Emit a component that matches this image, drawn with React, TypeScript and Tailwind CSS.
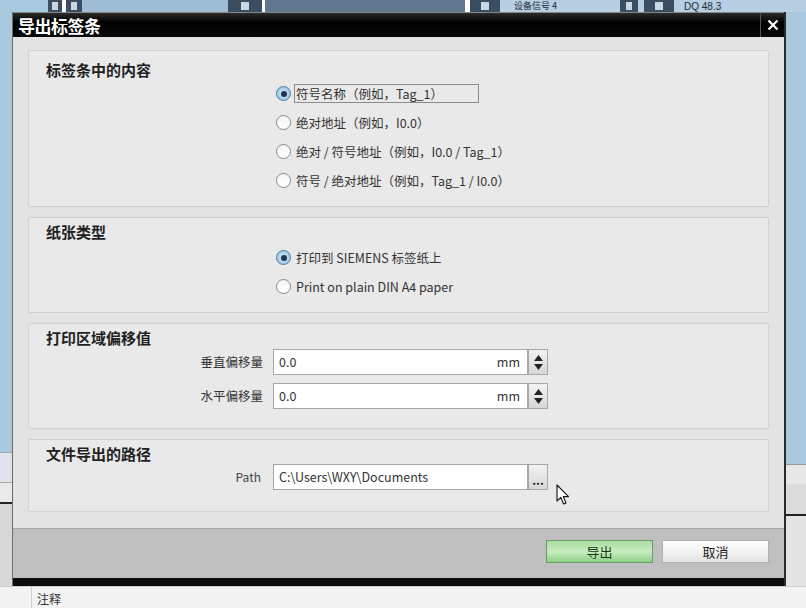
import React from "react";

const font = { fontFamily: '"Noto Sans CJK SC", "Noto Sans", sans-serif' };

function Radio({ checked, label, focus }: { checked?: boolean; label: string; focus?: boolean }) {
  return (
    <div className="flex items-center h-[29px]">
      {checked ? (
        <div className="w-[15px] h-[15px] rounded-full border border-[#4a7fa8] bg-[radial-gradient(circle,#e8f4fc_0%,#9cc6e4_70%,#6ea6cf_100%)] flex items-center justify-center shrink-0">
          <div className="w-[6px] h-[6px] rounded-full bg-[#1d3550]" />
        </div>
      ) : (
        <div className="w-[15px] h-[15px] rounded-full border border-[#8a8a8a] bg-[linear-gradient(#f4f4f4,#ffffff)] shrink-0" />
      )}
      <div
        className={
          "ml-[3px] pl-[1px] text-[12.5px] leading-[16px] text-[#333] " +
          (focus ? "border border-[#8c8c8c] w-[185px] h-[19px] flex items-center" : "border border-transparent")
        }
      >
        {label}
      </div>
    </div>
  );
}

function Section({ title, children, h, pt }: { title: string; children: React.ReactNode; h: string; pt: string }) {
  return (
    <div className={"border border-[#d2d2d2] bg-[#e9e9e9] rounded-[2px] " + h}>
      <div className={"pl-[17px] text-[15px] font-bold leading-[22px] text-[#1f1f1f] " + pt}>{title}</div>
      {children}
    </div>
  );
}

function Spinner() {
  return (
    <div className="w-[20px] h-[26px] border border-[#a8a8a8] bg-[linear-gradient(#f2f2f2,#d6d6d6)] flex flex-col items-center justify-center gap-[3px]">
      <svg width="9" height="6" viewBox="0 0 9 6"><path d="M0 6 L4.5 0 L9 6 Z" fill="#222" /></svg>
      <svg width="9" height="6" viewBox="0 0 9 6"><path d="M0 0 L9 0 L4.5 6 Z" fill="#222" /></svg>
    </div>
  );
}

function NumRow({ label }: { label: string }) {
  return (
    <div className="flex items-center h-[26px]">
      <div className="w-[244px] text-right pr-[10px] text-[12.5px] text-[#333]">{label}</div>
      <div className="w-[255px] h-[26px] bg-white border border-[#a8a8a8] flex items-center justify-between px-[5px] text-[12.5px] text-[#333]">
        <span>0.0</span>
        <span className="pr-[2px]">mm</span>
      </div>
      <Spinner />
    </div>
  );
}

export default function App() {
  return (
    <div className="w-[806px] h-[608px] overflow-hidden bg-[#a8c8df] flex flex-col relative" style={font}>
      {/* background app top strip */}
      <div className="h-[12px] flex items-stretch shrink-0 bg-[#9dbcd4]">
        <div className="w-[48px] bg-[#a9c9e1]" />
        <div className="w-[14px] bg-[#3b4d60] flex items-center justify-center"><div className="w-[6px] h-[8px] bg-[#c9d7e3]" /></div>
        <div className="w-[4px] bg-white" />
        <div className="w-[16px] bg-[#3b4d60] flex items-center justify-center"><div className="w-[6px] h-[8px] bg-[#c9d7e3]" /></div>
        <div className="w-[146px] bg-[#9fbdd4]" />
        <div className="w-[34px] bg-[#3b4d60] flex items-center justify-center"><div className="w-[8px] h-[8px] bg-[#c9d7e3]" /></div>
        <div className="w-[3px] bg-white" />
        <div className="w-[200px] bg-[#5f7890]" />
        <div className="w-[5px] bg-white" />
        <div className="w-[30px] bg-[#3b4d60] flex items-center justify-center"><div className="w-[8px] h-[8px] bg-[#c9d7e3]" /></div>
        <div className="w-[120px] bg-[#b7cfe2] flex items-center pl-[14px]">
          <span className="text-[9px] leading-[10px] text-[#1d2a38] whitespace-nowrap">设备信号 4</span>
        </div>
        <div className="w-[18px] bg-[#3b4d60] flex items-center justify-center"><div className="w-[6px] h-[8px] bg-[#c9d7e3]" /></div>
        <div className="w-[6px] bg-[#b7cfe2]" />
        <div className="w-[30px] bg-[#3b4d60] flex items-center justify-center"><div className="w-[8px] h-[8px] bg-[#c9d7e3]" /></div>
        <div className="flex-1 bg-[#b7cfe2] flex items-center pl-[10px]">
          <span className="text-[10px] leading-[11px] text-[#1d2a38] whitespace-nowrap" style={{ fontFamily: '"Liberation Sans", sans-serif' }}>DQ 48.3</span>
        </div>
      </div>

      <div className="flex flex-1 min-h-0">
        {/* left background */}
        <div className="w-[12px] flex flex-col">
          <div className="h-[440px] bg-[#a9c9e1]" />
          <div className="h-[30px] bg-[#dfe5ea] border-t border-[#99aaaa]" />
          <div className="h-[20px] bg-[#eaeaea] border-t border-[#aaaaaa]" />
          <div className="h-[2px] bg-[#222]" />
          <div className="flex-1 bg-[#d8d8d8]" />
        </div>

        {/* dialog */}
        <div className="w-[774px] h-[574px] flex flex-col border-l border-[#6c6c6c] border-r-2 border-r-[#2a2a2a] bg-[#e2e2e2]">
          <div className="h-[25px] bg-[linear-gradient(#2b2b2b,#000_40%,#0a0a0a)] flex items-center justify-between border-t border-[#888]">
            <span className="pl-[5px] text-white text-[17px] font-bold leading-none tracking-[-0.5px]">导出标签条</span>
            <div className="w-[24px] h-full border-l border-[#555] flex items-center justify-center">
              <svg width="12" height="12" viewBox="0 0 12 12"><path d="M1.5 1.5 L10.5 10.5 M10.5 1.5 L1.5 10.5" stroke="#fff" strokeWidth="2.2" /></svg>
            </div>
          </div>

          <div className="flex-1 px-[15px] pt-[13px] flex flex-col gap-[10px] bg-[#e3e3e3]">
            <Section title="标签条中的内容" h="h-[157px]" pt="pt-[8px]">
              <div className="pl-[247px] -mt-[2px] flex flex-col">
                <Radio checked focus label="符号名称（例如，Tag_1）" />
                <Radio label="绝对地址（例如，I0.0）" />
                <Radio label="绝对 / 符号地址（例如，I0.0 / Tag_1）" />
                <Radio label="符号 / 绝对地址（例如，Tag_1 / I0.0）" />
              </div>
            </Section>
            <Section title="纸张类型" h="h-[96px]" pt="pt-[3px]">
              <div className="pl-[247px] flex flex-col">
                <Radio checked label="打印到 SIEMENS 标签纸上" />
                <Radio label="Print on plain DIN A4 paper" />
              </div>
            </Section>
            <Section title="打印区域偏移值" h="h-[106px]" pt="pt-[3px]">
              <div className="flex flex-col gap-[8px]">
                <NumRow label="垂直偏移量" />
                <NumRow label="水平偏移量" />
              </div>
            </Section>
            <Section title="文件导出的路径" h="h-[73px]" pt="pt-[3px]">
              <div className="-mt-[1px] flex items-center h-[26px]">
                <div className="w-[244px] text-right pr-[12px] text-[12px] text-[#444]">Path</div>
                <div className="w-[255px] h-[26px] bg-white border border-[#a8a8a8] flex items-center px-[5px] text-[12.5px] text-[#333]">
                  C:\Users\WXY\Documents
                </div>
                <div className="w-[20px] h-[26px] border border-[#a8a8a8] bg-[linear-gradient(#f2f2f2,#d8d8d8)] flex items-end justify-center pb-[3px] text-[12px] leading-none font-bold text-[#222]">
                  ...
                </div>
              </div>
            </Section>
          </div>

          <div className="h-[58px] bg-[#bfbfbf] border-t border-[#a8a8a8] border-b-[8px] border-b-[#0c0c0c] flex items-center justify-end gap-[9px] pr-[15px] pb-[4px]">
            <button className="w-[107px] h-[23px] border border-[#6a9a6a] bg-[linear-gradient(#a8dca0,#c8ecc0_50%,#8cd084)] text-[13px] text-[#1a3a1a]">导出</button>
            <button className="w-[107px] h-[23px] border border-[#b0b0b0] bg-[linear-gradient(#ffffff,#f0f0f0_60%,#e2e2e2)] text-[13px] text-[#222]">取消</button>
          </div>
        </div>

        {/* right background */}
        <div className="flex-1 flex flex-col">
          <div className="h-[452px] bg-[#a9c9e1]" />
          <div className="h-[20px] bg-[#e8e8e8] border-t border-[#999]" />
          <div className="h-[30px] bg-[#dcdcdc]" />
          <div className="h-[2px] bg-[#222]" />
          <div className="flex-1 bg-[#e4e4e4]" />
        </div>
      </div>

      {/* bottom strip */}
      <div className="h-[22px] bg-[#f3f3f3] border-t border-[#cfcfcf] flex items-end shrink-0">
        <div className="w-[32px] h-full border-r border-[#d0d0d0]" />
        <span className="pl-[5px] pb-[1px] text-[12px] leading-[16px] text-[#333]">注释</span>
      </div>

      {/* mouse cursor */}
      <svg className="absolute left-[556px] top-[484px]" width="14" height="22" viewBox="0 0 14 22">
        <path d="M1 1 L1 17 L4.8 13.4 L7.6 20 L10 19 L7.3 12.6 L12.5 12.6 Z" fill="#fff" stroke="#111" strokeWidth="1.1" strokeLinejoin="round" />
      </svg>
    </div>
  );
}
